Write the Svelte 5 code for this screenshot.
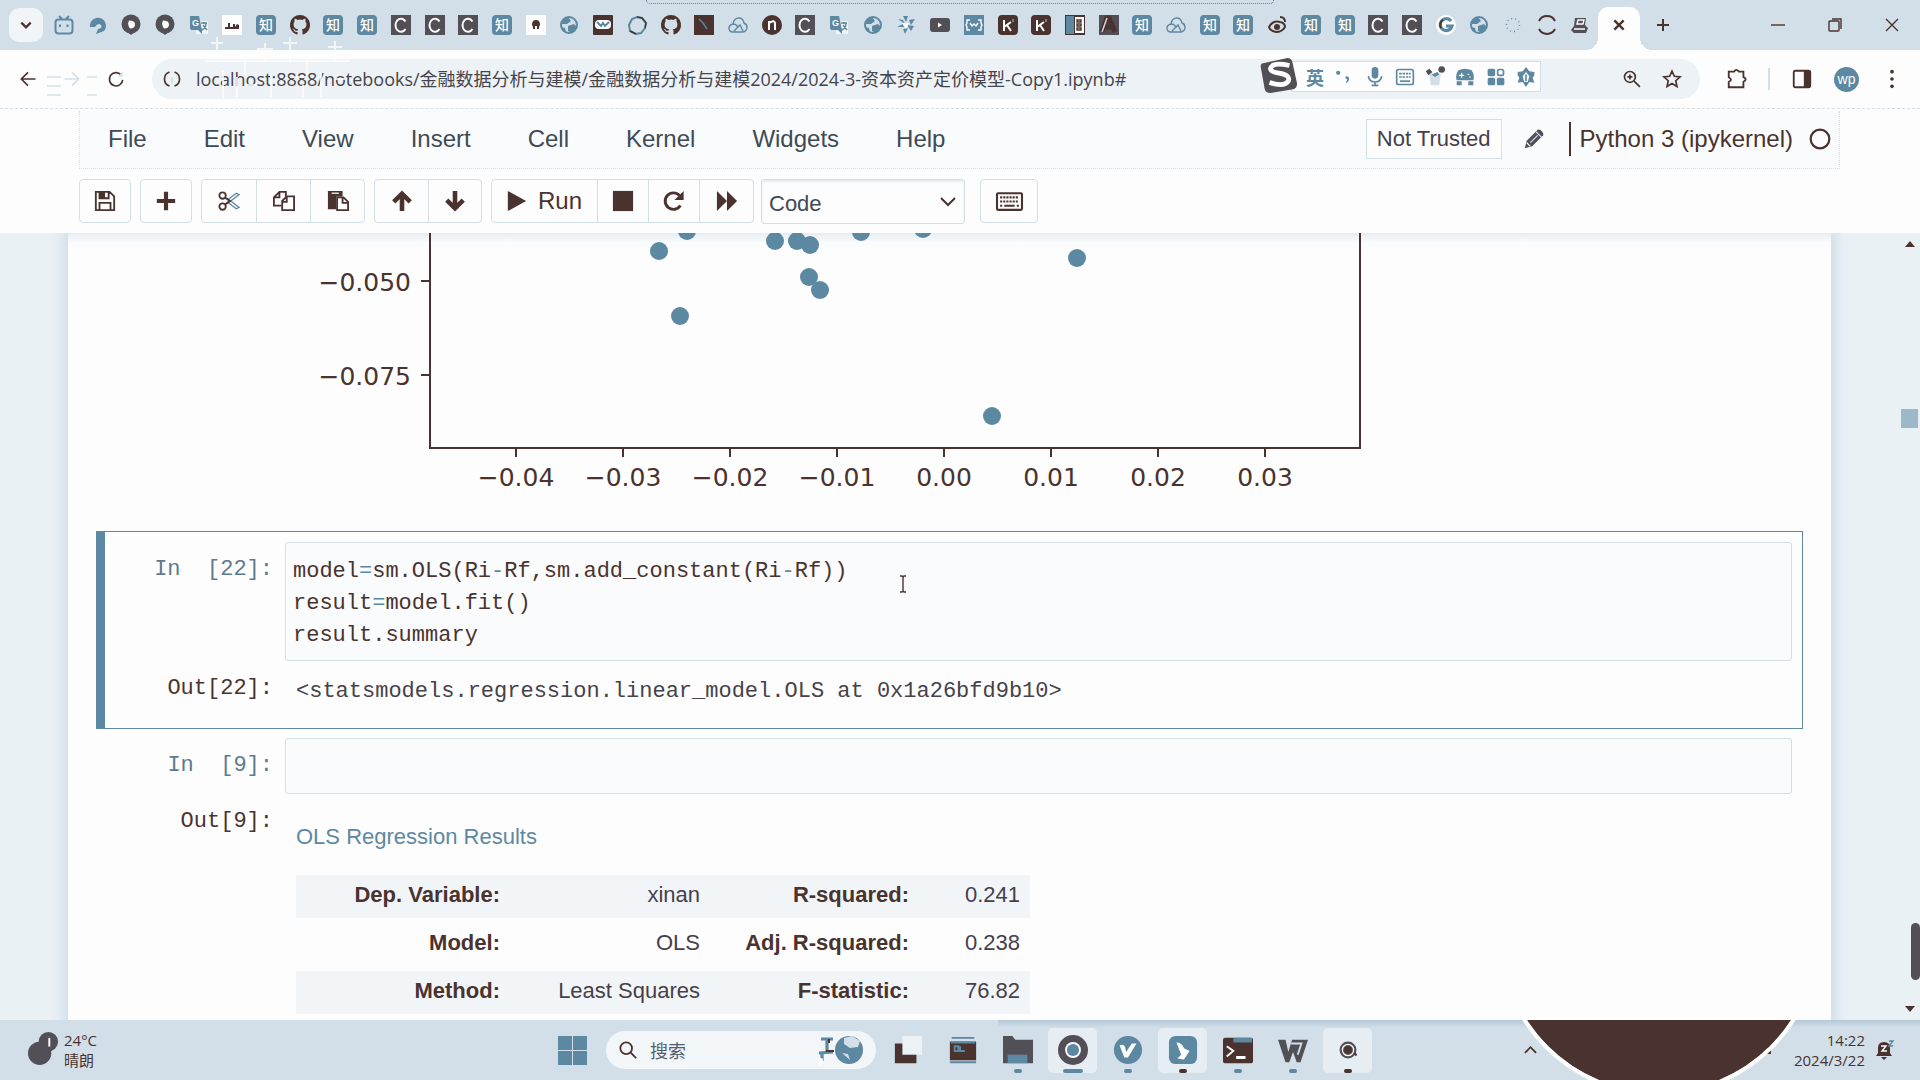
<script>
  const tabs = [
    'bili', 'swirl', 'ring', 'ring', 'translate', 'train', 'zhi', 'github', 'zhi', 'zhi', 'c', 'c', 'c', 'zhi',
    'face', 'globe', 'bag', 'knot', 'github', 'dark', 'cloud', 'n', 'c', 'translate', 'globe', 'wheel', 'video',
    'code', 'k', 'k', 'book', 'a', 'zhi', 'cloud', 'zhi', 'zhi', 'eye', 'zhi', 'zhi', 'c', 'c', 'g', 'globe',
    'dots', 'spin', 'jupyter'
  ];
  const menus = ['File', 'Edit', 'View', 'Insert', 'Cell', 'Kernel', 'Widgets', 'Help'];
  const groups = [['save'], ['plus'], ['cut', 'copy', 'paste'], ['up', 'down'], ['run', 'stop', 'restart', 'forward']];
  const labels = {
    save: 'Save', plus: 'Insert cell below', cut: 'Cut', copy: 'Copy', paste: 'Paste', up: 'Move up', down: 'Move down',
    run: 'Run', stop: 'Interrupt', restart: 'Restart', forward: 'Restart and run all'
  };
  const points = [
    [391, -2], [363, 18], [479, 8], [501, 8], [514, 12], [513, 44], [524, 57], [384, 83], [565, -1], [627, -4], [781, 25], [696, 183]
  ];
  const xTicks = ['−0.04', '−0.03', '−0.02', '−0.01', '0.00', '0.01', '0.02', '0.03'];
  const yTicks = [['−0.050', 48], ['−0.075', 142]];
  const rows = [
    ['Dep. Variable:', 'xinan', 'R-squared:', '0.241'],
    ['Model:', 'OLS', 'Adj. R-squared:', '0.238'],
    ['Method:', 'Least Squares', 'F-statistic:', '76.82']
  ];
  const apps = [
    ['tasks', ''], ['card', ''], ['folder', 'dot'], ['chrome', 'wide lit'], ['vnote', 'dot'],
    ['bird', 'dot dark lit'], ['terminal', 'dot'], ['wps', 'dot'], ['record', 'dot dark lit']
  ];
  let cellType = $state('Code');
</script>

{#snippet favicon(name)}
  <svg class="fav" viewBox="0 0 20 20" aria-hidden="true">
    {#if name === 'bili'}
      <path d="M5 1l3 3M15 1l-3 3" class="sb" /><rect x="1.5" y="4.5" width="17" height="14" rx="3" class="sb" /><path d="M6 9.500v2.500M13.500 9.500v2.500" class="sb" />
    {:else if name === 'swirl'}
      <path d="M2 12A8 8 0 1 1 16 16L8 19l2-5q5-1 3-4-3-3-6 2z" class="b" />
    {:else if name === 'ring'}
      <circle cx="10" cy="9" r="9.500" class="mix" /><path d="M5 16l5 4 5-4z" class="mix" /><path d="M8 5.500q6 0 6 4t-5 4q-3-4-1-8z" class="w" />
    {:else if name === 'translate'}
      <rect x="7" y="6" width="12" height="13" class="w" opacity=".7" /><path d="M1 1h9l3 14H3q-2 0-2-2z" class="b" /><path d="M9 15l4 4v-4z" class="b" /><text x="3" y="11" class="tw" font-size="9">G</text><path d="M12 8h6M15 7v2M13 15q4-2 4-7M14 10l4 5" class="sb thin" />
    {:else if name === 'train'}
      <rect width="20" height="20" class="w" /><path d="M3 12h3V8h2v4h3V9h2v3l2-3 2 1v4H3z" class="d" />
    {:else if name === 'zhi'}
      <rect width="20" height="20" rx="4" class="b" /><text x="3" y="15" class="tw cjk" font-size="14">知</text>
    {:else if name === 'github'}
      <path class="d" d="M10 0a10 10 0 0 0-3.200 19.500c.5.1.7-.2.7-.5v-2c-2.800.6-3.400-1.200-3.400-1.200-.4-1.100-1.100-1.500-1.100-1.500-.9-.6.1-.6.1-.6 1 .1 1.500 1 1.500 1 .9 1.600 2.400 1.100 3 .8.1-.6.3-1.100.6-1.300-2.200-.3-4.600-1.100-4.600-5 0-1.100.4-2 1-2.700-.1-.2-.4-1.300.1-2.600 0 0 .9-.3 2.800 1a9.500 9.500 0 0 1 5 0c1.900-1.300 2.800-1 2.800-1 .5 1.300.2 2.400.1 2.600.6.7 1 1.600 1 2.700 0 3.900-2.300 4.700-4.600 5 .4.3.7.9.7 1.800V19c0 .3.2.6.7.5A10 10 0 0 0 10 0z" />
    {:else if name === 'c'}
      <rect width="20" height="20" class="mix" /><path d="M14.500 6.500A5.500 6.500 0 1 0 14.500 14" class="sw" />
    {:else if name === 'face'}
      <rect width="20" height="20" class="w" /><path d="M6 10q0-5 4-5t4 5l-1 2v2h-2v-3H9v3H7v-2z" class="d" />
    {:else if name === 'globe'}
      <circle cx="10" cy="10" r="8" class="lt" /><circle cx="10" cy="10" r="8" class="sb" /><path d="M9 2l3 4-4 3H2q1-5 7-7zM9 11l6-2 3 3-5 6-4-2zM2 12l4 1 1 4q-5-1-5-5z" class="b" />
    {:else if name === 'bag'}
      <rect width="20" height="20" rx="1" class="d" /><rect x="2" y="5" width="16" height="9" rx="4" class="w" /><path d="M4 7l4 4 2-3 2 3 4-4" class="sb" />
    {:else if name === 'knot'}
      <path d="M10 2l5 1 4 5-1 5-4 5-5 1-6-3-1-6 3-6z" class="sb" /><path d="M10 2l5 1 4 5-1 5M9 19l-6-3" class="sd thin" />
    {:else if name === 'dark'}
      <rect width="20" height="20" class="d" /><path d="M5 4l4 4 4 6" class="sb thin" />
    {:else if name === 'cloud'}
      <path d="M5 17q-4 0-4-4 0-3 4-4 1-6 6-6 4 0 5 5 3 1 3 4.500T15 17zM6 16l6-6 3 6M5 9q4 0 5 4" class="sb thin" />
    {:else if name === 'n'}
      <circle cx="10" cy="10" r="10" class="d" /><path d="M7 15V6M7 8q6-4 6 1v6" class="sw" />
    {:else if name === 'wheel'}
      <path d="M7 1h5l-2 6zM13 5l6-1-4 6zM18 11l-3 5-4-6zM12 13l-3 6-2-5zM8 12H1l6-3zM2 4l5 1 2 4z" class="b" /><path d="M6 8h7l-3 6z" class="w" />
    {:else if name === 'video'}
      <rect y="3" width="20" height="14" rx="3" class="mix" /><path d="M8 7.500v5l4-2.500z" class="w" />
    {:else if name === 'code'}
      <rect width="20" height="20" class="b" /><path d="M6 5H3v3l-1 2 1 2v3h3M14 5h3v3l1 2-1 2v3h-3M6 8l2 3 2-2 2 2 2-3" class="sw thin" />
    {:else if name === 'k'}
      <rect width="20" height="20" rx="4" class="d" /><path d="M6 5v11M13 7l-7 5M9 10l4 6" class="sw" /><path d="M15 4v3" class="sb" />
    {:else if name === 'book'}
      <rect width="20" height="20" class="d" /><rect x="1" y="1" width="8" height="18" class="b" /><rect x="10" y="2" width="9" height="16" class="w" /><path d="M12 5h4v2h-4zM12 9h4v2h-4zM12 13h4v2h-4z" class="sd thin" />
    {:else if name === 'a'}
      <rect width="20" height="20" class="mix" /><path d="M3 17L8 3h2l6 14M6 12h7" class="sd heavy" /><path d="M3 17L8 3" class="sl thin" />
    {:else if name === 'eye'}
      <path d="M2 12q4-7 11-5 5 1 5 5-3 5-9 5-6-1-7-5z" class="sd" /><circle cx="10" cy="12" r="3" class="d" /><path d="M13 2q5 0 5 5" class="sd" />
    {:else if name === 'g'}
      <circle cx="10" cy="10" r="10" class="w" /><path d="M15 6a6 6 0 1 0 1 5h-6" class="sb bold" /><path d="M5 13a6 6 0 0 1 2-8" class="sd" />
    {:else if name === 'dots'}
      <circle cx="10" cy="10" r="6.500" class="sb thin sparse" />
    {:else if name === 'spin'}
      <path d="M2 6a9 9 0 0 1 16 0M2 14a9 9 0 0 0 16 0" class="sd" />
    {:else if name === 'jupyter'}
      <path d="M5 3h11l-1 7 3 3-2 5H4l-3-3 3-4z" class="mix" /><path d="M8 5h6l-1 4H7zM4 14h11" class="sw thin" />
    {/if}
  </svg>
{/snippet}

{#snippet icon(name)}
  <svg class="ic" viewBox="0 0 24 24" aria-hidden="true">
    {#if name === 'save'}
      <path d="M2 2h15l5 5v15H2zM6 2v7h10V2M6 22v-8h12v8" class="sd" /><path d="M6 2h6v7H6z" class="d" />
    {:else if name === 'plus'}
      <path d="M12 1v22M1 12h22" class="sd heavy" />
    {:else if name === 'cut'}
      <circle cx="5" cy="6" r="3.500" class="sd" /><circle cx="5" cy="18" r="3.500" class="sd" /><path d="M10 9l13 10-3 1.500L10 13M10 15l13-10-3-1.500L10 11" class="sb thin" /><path d="M8 8.500l5 3.500-5 3.500" class="sd" />
    {:else if name === 'copy'}
      <path d="M9 17H1V8l6-6h7v5M7 2v6H1" class="sd" /><path d="M10 22V12l5-5h8v15zM15 7v6h-5" class="sd" />
    {:else if name === 'paste'}
      <path d="M1 1h16v6h-7v14H1z" class="d" /><path d="M5 3.500h8" class="sw thin" /><path d="M11 8h7l5 5v9H11zM17 8v6h6" class="sd" />
    {:else if name === 'up'}
      <path d="M12 23V4M3 13l9-9 9 9" class="sd heavy" />
    {:else if name === 'down'}
      <path d="M12 1v19M3 11l9 9 9-9" class="sd heavy" />
    {:else if name === 'run'}
      <path d="M1 0l22 12L1 24z" class="d" />
    {:else if name === 'stop'}
      <rect x="1" y="1" width="22" height="22" class="d" />
    {:else if name === 'restart'}
      <path d="M19 17a9 9 0 1 1-1-11" class="sd bold" /><path d="M22.500 1v10h-10z" class="d" />
    {:else if name === 'forward'}
      <path d="M1 1l11 11L1 23zM12 1l11 11-11 11z" class="d" />
    {:else if name === 'keyboard'}
      <rect x="0" y="4" width="24" height="16" rx="1" class="sd" /><path d="M3 8h18M3 12h18" class="sd dash" /><path d="M7 16h10M3 16h2M19 16h2" class="sd" />
    {:else if name === 'pencil'}
      <path d="M2 22l2-8L16 2q2-1 4 1 3 3 2 5L10 20z" class="mix" /><path d="M8 16l8-8M14 4l6 6" class="sl thin" /><path d="M4 16l4 4" class="sw thin" />
    {:else if name === 'back'}
      <path d="M21 12H4M12 4l-8 8 8 8" class="sd" />
    {:else if name === 'next'}
      <path d="M3 12h16M12 4l8 8-8 8" class="sl" />
    {:else if name === 'reload'}
      <path d="M18 7a8 8 0 1 0 2 6" class="sd" /><path d="M20 3v6h-6z" class="lt" />
    {:else if name === 'info'}
      <path d="M9 3.500a9 9 0 0 0 0 17M15 3.500a9 9 0 0 1 0 17" class="sd" /><path d="M12 10v7" class="sl" />
    {:else if name === 'zoom'}
      <circle cx="9.500" cy="9.500" r="6.500" class="sd" /><path d="M14.500 14.500l7 7M6.500 9.500h6M9.500 6.500v6" class="sd" />
    {:else if name === 'star'}
      <path d="M12 2.500l2.800 6.300 6.900.7-5.200 4.600 1.500 6.900-6-3.600L6 21l1.500-6.900-5.200-4.600 6.900-.7z" class="sd" />
    {:else if name === 'puzzle'}
      <path d="M3 4h6q2-4 5 0h5v6q5 2 0 5v6H3v-6q5-2 0-5z" class="sd" />
    {:else if name === 'panel'}
      <rect x="3" y="3" width="18" height="18" rx="2" class="sd" /><path d="M14 3h7v18h-7z" class="d" />
    {:else if name === 'more'}
      <circle cx="12" cy="4" r="2" class="d" /><circle cx="12" cy="12" r="2" class="d" /><circle cx="12" cy="20" r="2" class="d" />
    {:else if name === 'punct'}
      <circle cx="5" cy="7" r="2.500" class="b" /><path d="M14 11q5 0 4 4-1 4-4 4l2-4q-3-1-2-4z" class="b" />
    {:else if name === 'mic'}
      <rect x="8" y="0" width="8" height="14" rx="4" class="b" /><path d="M4 11q1 7 8 7t8-7M12 18v3M8 22h8" class="sb" />
    {:else if name === 'keys'}
      <rect x="2" y="3" width="20" height="18" rx="2" class="sb" /><path d="M5 8h14M5 12h14" class="sb keydash" /><path d="M6 17h12" class="sb" />
    {:else if name === 'shirt'}
      <path d="M5 8h14l-2 14H7z" class="lt" /><path d="M1 5l4-3 4 4-5 4z" class="mix" /><circle cx="20" cy="3" r="4" class="mix" /><path d="M8 9l7-3 2 3-5 3z" class="b" />
    {:else if name === 'game'}
      <path d="M4 4q8-4 16 0 4 6 2 12H2Q0 10 4 4z" class="b" /><path d="M2 17h6v5H2zM16 17h6v5h-6z" class="b" /><path d="M8 7v6M5 10h6M15 9h2M17 12h2" class="sw thin" />
    {:else if name === 'grid'}
      <rect x="2" y="2" width="9" height="9" rx="2" class="b" /><rect x="14" y="3" width="7" height="7" rx="2" class="sb" /><rect x="2" y="13" width="9" height="9" rx="2" class="b" /><rect x="13" y="13" width="9" height="9" rx="2" class="b" />
    {:else if name === 'gear'}
      <path d="M12 0l4 5 6 1v4l-2 3 2 6-6-1-4 6-4-6-6 1 2-6-2-3V6l6-1z" class="b" /><path d="M12 6l4 5-2 7h-4l-2-7z" class="w" /><path d="M12 9v8" class="sb" />
    {/if}
  </svg>
{/snippet}

{#snippet app(name)}
  <svg class="app-ic" viewBox="0 0 32 32" aria-hidden="true">
    {#if name === 'tasks'}
      <rect x="10" y="1" width="21" height="20" class="w" opacity=".6" /><path d="M2 9h8v12h15v9H2z" class="d" />
    {:else if name === 'card'}
      <path d="M4 3h24M2 29h28" class="sb" /><rect x="2" y="7" width="28" height="20" class="d" /><path d="M3 8h26M7 12h4v5H7zM13 12v5h5" class="sb" />
    {:else if name === 'folder'}
      <path d="M0 1h10l3 4h19v25H0z" class="mix" /><rect x="5" y="21" width="21" height="9" class="b" />
    {:else if name === 'chrome'}
      <circle cx="16" cy="16" r="16" class="mix" /><circle cx="16" cy="16" r="8.500" class="w" /><circle cx="16" cy="16" r="6.500" class="b" />
    {:else if name === 'vnote'}
      <circle cx="16" cy="16" r="15" class="b" /><path d="M7 11q5-2 6 2l1 5 6-9h5l-9 15h-4z" class="w" />
    {:else if name === 'bird'}
      <rect x="1" y="1" width="30" height="30" rx="7" class="b" /><path d="M9 8q6 0 8 6l6 3-6 9-7-1 4-4z" class="w" />
    {:else if name === 'terminal'}
      <rect x="0" y="3" width="32" height="27" rx="2" class="d" /><path d="M11 3h20v5H11z" class="b" /><path d="M4 12l7 5-7 6" class="sw" /><path d="M14 24h10" class="sw bold" />
    {:else if name === 'wps'}
      <path d="M0 5h8l3 13 4-13h17l-8 24h-4l-4-11-4 11H8z" class="mix" /><path d="M14 9h11l-4 12" class="sl" />
    {:else if name === 'record'}
      <circle cx="16" cy="16" r="9" class="mix" /><circle cx="16" cy="16" r="6" class="sw thin" /><circle cx="16" cy="16" r="4" class="d" /><path d="M23 19l2 3" class="sd" />
    {/if}
  </svg>
{/snippet}

<div class="screen">
  <header class="tabbar">
    <button class="list" aria-label="Search tabs"><svg viewBox="0 0 12 12"><path d="M2 4l4 4 4-4" class="sd" /></svg></button>
    <nav class="strip" aria-label="Tabs">
      {#each tabs as t}
        <button class="tab" aria-label={t}>{@render favicon(t)}</button>
      {/each}
    </nav>
    <div class="active"><button aria-label="Close tab"><svg viewBox="0 0 12 12"><path d="M2 2l8 8M10 2l-8 8" class="sd" /></svg></button></div>
    <button class="new" aria-label="New tab"><svg viewBox="0 0 14 14"><path d="M7 1v12M1 7h12" class="sd" /></svg></button>
    <div class="win">
      <button aria-label="Minimize"><svg viewBox="0 0 14 14"><path d="M0 7h14" class="sd thin" /></svg></button>
      <button aria-label="Restore"><svg viewBox="0 0 14 14"><rect x="1" y="3" width="10" height="10" rx="1" class="sd thin" /><path d="M4 1h9v10" class="sd thin" /></svg></button>
      <button aria-label="Close"><svg viewBox="0 0 14 14"><path d="M1 1l12 12M13 1L1 13" class="sd thin" /></svg></button>
    </div>
    <div class="pull"></div>
  </header>

  <div class="address">
    <button class="tool" aria-label="Back">{@render icon('back')}</button>
    <button class="tool" aria-label="Forward">{@render icon('next')}</button>
    <button class="tool" aria-label="Reload">{@render icon('reload')}</button>
    <div class="omni">
      <button class="tool" aria-label="Site information">{@render icon('info')}</button>
      <input aria-label="Address" value="localhost:8888/notebooks/金融数据分析与建模/金融数据分析与建模2024/2024-3-资本资产定价模型-Copy1.ipynb#" />
      <button class="tool" aria-label="Zoom">{@render icon('zoom')}</button>
      <button class="tool" aria-label="Bookmark">{@render icon('star')}</button>
    </div>
    <div class="ext">
      <button aria-label="Extensions">{@render icon('puzzle')}</button>
      <i></i>
      <button aria-label="Side panel">{@render icon('panel')}</button>
      <button class="avatar" aria-label="Profile">wp</button>
      <button aria-label="Menu">{@render icon('more')}</button>
    </div>
    <div class="ime">
      <svg class="sogou" viewBox="0 0 40 40" aria-hidden="true"><path d="M2 8l27-6q4 0 5 4l5 23q0 5-4 6l-24 4q-5 0-6-4L1 13q-1-4 1-5z" class="mix" /><path d="M31 10q-18-4-20 3 0 4 9 5 12 2 10 8-4 7-20 2" class="sw logo" /></svg>
      <span>英</span>
      {#each ['punct', 'mic', 'keys', 'shirt', 'game', 'grid', 'gear'] as n}{@render icon(n)}{/each}
    </div>
    <svg class="ghost" viewBox="0 0 330 75" aria-hidden="true">
      <g class="sw" opacity=".75"><path d="M172 2v22M166 8h12M220 8v18M212 14h16M245 2v26M238 8h14M290 6v20M283 12h14" /><path d="M160 26h145M200 20v20M262 18v22" /></g>
      <path d="M178 36v28M192 42v20M200 50h12M226 38v24M248 42h14M258 50v12M276 38v24M290 44h10" class="sw" opacity=".8" />
      <path d="M2 42h14M2 51h14M2 60h14M42 42h10M42 60h10" class="sl thin" />
    </svg>
  </div>

  <div class="jhead">
    <div class="menubar">
      {#each menus as m}<button>{m}</button>{/each}
      <div class="kernel">
        <button class="trust">Not Trusted</button>
        {@render icon('pencil')}
        <span class="kname">Python 3 (ipykernel)</span>
        <svg class="idle" viewBox="0 0 20 20" aria-hidden="true"><circle cx="10" cy="10" r="8.500" class="sd" /></svg>
      </div>
    </div>
    <div class="tools">
      {#each groups as g}
        <div class="group">
          {#each g as n}
            <button class={n} aria-label={labels[n]}>{@render icon(n)}{#if n === 'run'}<span>Run</span>{/if}</button>
          {/each}
        </div>
      {/each}
      <div class="pick">
        <select aria-label="Cell type" bind:value={cellType}><option>Code</option><option>Markdown</option></select>
        <svg viewBox="0 0 16 10" aria-hidden="true"><path d="M1 1l7 7 7-7" class="sd" /></svg>
      </div>
      <div class="group last"><button aria-label="Command palette">{@render icon('keyboard')}</button></div>
    </div>
  </div>

  <main class="site">
    <div class="scroller">
      <section class="book">
        <div class="plot">
          <svg viewBox="0 0 1080 280" role="img" aria-label="Scatter plot">
            {#each points as [x, y]}<circle cx={x} cy={y} r="9" class="b" />{/each}
            <path d="M134 0v215h930V0" class="axis" />
            {#each yTicks as [t, y]}
              <path d="M125 {y}h9" class="axis" /><text x="115" y={y + 10} text-anchor="end">{t}</text>
            {/each}
            {#each xTicks as t, i}
              <path d="M{220 + i * 107} 215v9" class="axis" /><text x={220 + i * 107} y="253" text-anchor="middle">{t}</text>
            {/each}
          </svg>
        </div>
        <article class="cell selected">
          <div class="row">
            <div class="prompt in">In  [22]:</div>
            <pre class="code">model<b>=</b>sm.OLS(Ri<b>-</b>Rf,sm.add_constant(Ri<b>-</b>Rf))
result<b>=</b>model.fit()
result.summary</pre>
          </div>
          <div class="row">
            <div class="prompt out">Out[22]:</div>
            <pre class="result">&lt;statsmodels.regression.linear_model.OLS at 0x1a26bfd9b10&gt;</pre>
          </div>
          <svg class="caret" viewBox="0 0 8 18" aria-hidden="true"><path d="M1 1h2l1 1 1-1h2M4 2v14M1 17h2l1-1 1 1h2" class="sd thin" /></svg>
        </article>
        <article class="cell">
          <div class="row">
            <div class="prompt in">In  [9]:</div>
            <pre class="code"> </pre>
          </div>
          <div class="row">
            <div class="prompt out">Out[9]:</div>
            <table>
              <caption>OLS Regression Results</caption>
              <tbody>
                {#each rows as r}
                  <tr><th>{r[0]}</th><td>{r[1]}</td><th>{r[2]}</th><td>{r[3]}</td></tr>
                {/each}
              </tbody>
            </table>
          </div>
        </article>
      </section>
    </div>
    <div class="bar" aria-hidden="true">
      <svg viewBox="0 0 10 6"><path d="M0 6l5-6 5 6z" class="d" /></svg>
      <i class="mark"></i>
      <i class="thumb"></i>
      <svg viewBox="0 0 10 6"><path d="M0 0l5 6 5-6z" class="d" /></svg>
    </div>
  </main>

  <footer class="taskbar">
    <div class="weather">
      <svg viewBox="0 0 32 36" aria-hidden="true"><circle cx="12" cy="23" r="12" class="mix" /><circle cx="21" cy="11" r="10" class="mix" /><path d="M22 7v9" class="sw" /></svg>
      <p>24°C<br />晴朗</p>
    </div>
    <div class="dock">
      <button class="start" aria-label="Start"><svg viewBox="0 0 29 29"><path d="M0 0h14v14H0zM15 0h14v14H15zM0 15h14v14H0zM15 15h14v14H15z" class="b" /></svg></button>
      <label class="search">
        <svg class="lens" viewBox="0 0 20 20" aria-hidden="true"><circle cx="8" cy="8" r="6.500" class="sd" /><path d="M13 13l6 6" class="sd" /></svg>
        <input aria-label="搜索" placeholder="搜索" />
        <svg class="art" viewBox="0 0 46 30" aria-hidden="true"><circle cx="31" cy="15" r="14" class="b" /><path d="M26 3l8-2 8 5-2 6-8 1-6-4zM24 18l6 1 2 6" class="lt" /><path d="M3 4h12M9 4v12M1 18l14-1M4 18v8" class="sb bold" /><path d="M8 16h8M11 4v4" class="sd" /><rect y="23" width="5" height="7" rx="2" class="w" /></svg>
      </label>
      {#each apps as [n, c]}
        <button class="app {c}" aria-label={n}>{@render app(n)}</button>
      {/each}
    </div>
    <div class="tray">
      <svg class="chev" viewBox="0 0 14 8" aria-hidden="true"><path d="M1 7l6-6 6 6" class="sd" /></svg>
      <svg class="plug" viewBox="0 0 12 10" aria-hidden="true"><path d="M0 8h9V4" class="sd" /><circle cx="9" cy="3" r="2" class="d" /></svg>
      <p>14:22<br />2024/3/22</p>
      <svg class="bell" viewBox="0 0 18 20" aria-hidden="true"><path d="M0 16l2-3V8q0-6 6-6t6 6v5l2 3zM5 17h6l-3 3z" class="d" /><path d="M5 6h5l-4 5h5" class="sw thin" /><path d="M13 1h4l-4 5h4" class="sb thin" /></svg>
    </div>
    <div class="disc"></div>
  </footer>
</div>

<style>
  :global(body) { margin: 0; }
  :global(#app) { height: 100vh; }
  .screen {
    --pale: #d2dfe9; --blue: #5d88a1; --dark: #4a332e; --mix: #534f56; --white: #fdfdfd;
    height: 100%; display: flex; flex-direction: column; overflow: hidden;
    background: var(--white); color: var(--dark); font-family: "Liberation Sans", Arial, sans-serif; font-size: 24px;
  }
  button, input, select { font: inherit; color: inherit; background: none; border: 0; padding: 0; margin: 0; }
  button { display: flex; align-items: center; justify-content: center; }
  svg { display: block; flex: none; overflow: visible; }
  .b { fill: var(--blue); }
  .d { fill: var(--dark); }
  .w { fill: var(--white); }
  .lt { fill: var(--pale); }
  .mix { fill: var(--mix); }
  .sb, .sd, .sw, .sl { fill: none; stroke-width: 2; }
  .sb { stroke: var(--blue); }
  .sd { stroke: var(--dark); }
  .sw { stroke: var(--white); }
  .sl { stroke: var(--pale); }
  .thin { stroke-width: 1.4; }
  .bold { stroke-width: 3.2; }
  .heavy { stroke-width: 5; }
  .logo { stroke-width: 5; }
  .dash { stroke-dasharray: 2 1; }
  .keydash { stroke-dasharray: 3 1; }
  .sparse { stroke-dasharray: 1 3; }
  .tw { fill: var(--white); font-weight: bold; }
  .cjk { font-family: "Noto Sans CJK SC", sans-serif; font-weight: 500; }

  .tabbar { position: relative; flex: none; height: 50px; display: flex; background: var(--pale); }
  .list { width: 34px; height: 34px; margin: 8px 4px 0 9px; border-radius: 10px; background: #f1f5f8; }
  .list svg { width: 14px; height: 14px; }
  .strip { flex: 1; display: flex; min-width: 0; }
  .tab { flex: 1; min-width: 0; }
  .fav { width: 20px; height: 20px; }
  .active { position: relative; width: 42px; height: 43px; margin: 7px 0 0 1px; border-radius: 10px 10px 0 0; background: var(--white); }
  .active::before, .active::after { content: ""; position: absolute; bottom: 0; width: 12px; height: 12px; }
  .active::before { right: 100%; background: radial-gradient(circle at 0 0, transparent 12px, var(--white) 12px); }
  .active::after { left: 100%; background: radial-gradient(circle at 100% 0, transparent 12px, var(--white) 12px); }
  .active button { width: 42px; height: 36px; }
  .active svg { width: 14px; height: 14px; }
  .new { width: 46px; }
  .new svg { width: 14px; height: 14px; }
  .win { display: flex; padding-left: 63px; }
  .win button { width: 57px; }
  .win svg { width: 14px; height: 14px; }
  .pull { position: absolute; left: 646px; top: 0; width: 626px; height: 3px; border: 1px dotted var(--blue); border-top: 0; border-radius: 0 0 8px 8px; }

  .address { position: relative; flex: none; height: 58px; display: flex; align-items: center; padding-left: 6px; }
  .tool { width: 44px; height: 40px; }
  .address .ic { width: 22px; height: 22px; }
  .address .tool .ic { width: 20px; height: 20px; }
  .omni { flex: 1; display: flex; align-items: center; height: 40px; margin-left: 14px; border-radius: 20px; background: #edf2f6; padding-right: 8px; }
  .omni .tool { width: 40px; }
  .omni input { flex: 1; min-width: 0; padding-bottom: 2px; margin-left: 4px; font-family: "Open Sans", "Noto Sans CJK SC", sans-serif; font-size: 18px; color: #46444b; }
  .ext { display: flex; align-items: center; width: 220px; }
  .ext button { width: 45px; height: 40px; margin: 0; }
  .ext button:first-child { margin-left: 14px; }
  .ext i { width: 2px; height: 22px; background: var(--pale); margin: 0 9px; }
  .ext .avatar { width: 25px; height: 25px; margin: 0 10px; border-radius: 50%; background: var(--blue); color: var(--white); font-size: 14px; }
  .ime { position: absolute; right: 379px; top: 11px; width: 250px; height: 31px; display: flex; align-items: center; justify-content: space-between; box-sizing: border-box; padding: 0 4px 0 14px; border: 1px solid var(--pale); background: var(--white); }
  .ime span { width: 18px; font: bold 18px/24px "Noto Sans CJK SC", sans-serif; color: var(--blue); }
  .address .ime .ic { width: 20px; height: 20px; }
  .sogou { position: absolute; left: -32px; top: -6px; width: 38px; height: 38px; }
  .ghost { position: absolute; left: 45px; top: -15px; width: 330px; height: 75px; pointer-events: none; }

  .jhead { flex: none; height: 125px; box-sizing: border-box; border-top: 1px dashed var(--pale); padding: 2px 80px 0 79px; position: relative; z-index: 1; background: var(--white); }
  .menubar { height: 58px; box-sizing: border-box; display: flex; border: 1px dotted var(--pale); border-top: 0; background: #fafbfc; color: #3f4a55; }
  .menubar > button { padding: 0 29px 0 28px; height: 56px; }
  .kernel { margin-left: auto; display: flex; align-items: center; padding: 0 8px 2px 0; color: var(--dark); }
  .trust { height: 40px; padding: 0 10px; margin-right: 21px; border: 1px solid var(--pale); font-size: 22px; color: #45404a; background: var(--white); }
  .kernel .ic { width: 22px; height: 22px; }
  .kname { margin: 0 16px 0 24px; padding-left: 9px; border-left: 2px solid var(--dark); line-height: 34px; }
  .idle { width: 22px; height: 22px; }
  .tools { display: flex; align-items: flex-start; gap: 9px; margin-top: 10px; }
  .group { display: flex; height: 44px; box-sizing: border-box; border: 1px solid var(--pale); border-radius: 4px; }
  .group button { width: 54px; }
  .group button + button { border-left: 1px solid var(--pale); }
  .group .save, .group .plus { width: 50px; }
  .group .up, .group .down { width: 53px; }
  .group .run { width: 105px; gap: 11px; }
  .group .stop, .group .restart { width: 51px; }
  .tools .ic { width: 22px; height: 22px; }
  .tools .plus .ic, .tools .run .ic { width: 20px; height: 20px; }
  .pick { position: relative; width: 204px; margin-left: -2px; }
  .pick select { appearance: none; width: 100%; height: 45px; padding: 3px 7px 0; border: 1px solid var(--pale); border-radius: 3px; font-size: 22px; color: #3f4a55; box-shadow: inset 0 2px 2px #e6edf2; }
  .pick svg { position: absolute; right: 9px; top: 18px; width: 16px; height: 10px; }
  .last { margin-left: 6px; }
  .tools .last button { width: 56px; }
  .tools .last .ic { width: 25px; height: 25px; }

  .site { flex: 1; min-height: 0; display: flex; background: #eaf1f5; }
  .scroller { flex: 1; overflow: hidden; padding: 0 68px; }
  .book { min-height: 100%; box-sizing: border-box; padding: 0 28px; background: linear-gradient(#e6edf2, #fbfcfd 10px, #fdfdfd 18px); box-shadow: 0 0 12px 6px var(--pale); }
  .plot { padding: 0 0 18px 200px; }
  .plot svg { width: 1080px; height: 280px; overflow: hidden; }
  .plot text { font: 25px "DejaVu Sans", sans-serif; fill: var(--dark); }
  .axis { fill: none; stroke: var(--dark); stroke-width: 2; }
  .cell { position: relative; padding: 5px 10px 5px 9px; border: 1px solid transparent; }
  .selected { padding: 10px 10px 20px 0; border-color: var(--blue); border-left: 9px solid var(--blue); }
  .cell:not(.selected) { padding-top: 8px; border-left: 0; }
  .row { display: flex; align-items: flex-start; font-family: "Liberation Mono", monospace; font-size: 22px; line-height: 32px; }
  .row + .row { margin-top: 1px; }
  .prompt { flex: none; width: 168px; padding: 12px 12px 0 0; text-align: right; white-space: pre; }
  .in { color: #5c7b8e; }
  .out { padding-top: 11px; }
  pre { margin: 0; font: inherit; }
  .code { flex: 1; min-width: 0; padding: 11px 7px; border: 1px solid var(--pale); border-radius: 3px; background: #fafbfc; }
  .selected .code { padding: 13px 7px 8px; }
  .code b { font-weight: normal; color: var(--blue); }
  .result { padding: 14px 0 0 11px; color: #46424a; }
  .caret { position: absolute; left: 794px; top: 43px; width: 8px; height: 18px; }
  table { margin: 25px 0 0 11px; border-spacing: 0 5px; font: 22px/24px "Liberation Sans", Arial, sans-serif; text-align: right; }
  caption { text-align: left; color: var(--blue); padding: 5px 0 21px; }
  th, td { padding: 8px 10px 11px; text-align: right; box-sizing: border-box; }
  td { color: #46404a; width: 200px; }
  th { width: 209px; }
  th:first-child { width: 214px; }
  td:last-child { width: 111px; }
  tr:nth-child(odd) { background: #f2f5f8; }
  .bar { width: 21px; display: flex; flex-direction: column; align-items: center; padding: 8px 0; }
  .bar svg { width: 10px; height: 6px; }
  .mark { width: 17px; height: 19px; margin: 162px 0 auto 0; background: #9db8c8; }
  .thumb { width: 9px; height: 57px; margin-bottom: 26px; border-radius: 5px; background: var(--mix); align-self: flex-end; }

  .taskbar { position: relative; flex: none; height: 60px; display: flex; align-items: center; overflow: hidden; background: var(--pale); }
  .taskbar::before { content: ""; position: absolute; inset: 0 0 auto 52%; height: 8px; background: linear-gradient(#b4c8d6, var(--pale)); }
  .weather { flex: 1; display: flex; gap: 5px; padding: 0 0 0 28px; }
  .weather svg { width: 31px; height: 35px; margin-top: 1px; }
  .taskbar p { margin: 0; font: 15px/20px "Open Sans", "Noto Sans CJK SC", sans-serif; }
  .weather, .dock, .tray { position: relative; box-sizing: border-box; }
  .dock { flex: none; display: flex; align-items: center; margin-right: 9px; }
  .weather, .tray { flex: 1 1 0; min-width: 0; }
  .start { width: 68px; height: 60px; }
  .start svg { width: 29px; height: 29px; }
  .search { width: 270px; height: 38px; margin-right: 4px; display: flex; align-items: center; box-sizing: border-box; padding: 0 12px 0 13px; border-radius: 19px; background: #f3f6f9; }
  .lens { width: 18px; height: 18px; }
  .search input { flex: 1; min-width: 0; width: 0; margin-left: 13px; font: 18px/24px "Noto Sans CJK SC", sans-serif; }
  .search input::placeholder { color: #51606c; opacity: 1; }
  .art { width: 46px; height: 30px; }
  .app { position: relative; width: 49px; height: 45px; margin: 0 3px; border-radius: 5px; }
  .lit { background: #e6edf3; }
  .app-ic { width: 30px; height: 30px; }
  .dot::after, .wide::after { content: ""; position: absolute; bottom: 0; width: 8px; height: 4px; border-radius: 2px; background: var(--blue); }
  .wide::after { width: 20px; }
  .dark::after { background: var(--dark); }
  .tray { display: flex; align-items: center; justify-content: flex-end; padding-right: 26px; }
  .tray p { text-align: right; margin-right: 11px; }
  .chev { width: 13px; height: 8px; margin-right: auto; margin-left: 140px; }
  .plug { width: 12px; height: 10px; margin-right: 21px; }
  .bell { width: 18px; height: 20px; }
  .disc { position: absolute; right: 104px; bottom: -12px; width: 314px; height: 314px; box-sizing: border-box; border-radius: 50%; background: var(--dark); outline: 4px solid var(--white); }
</style>
